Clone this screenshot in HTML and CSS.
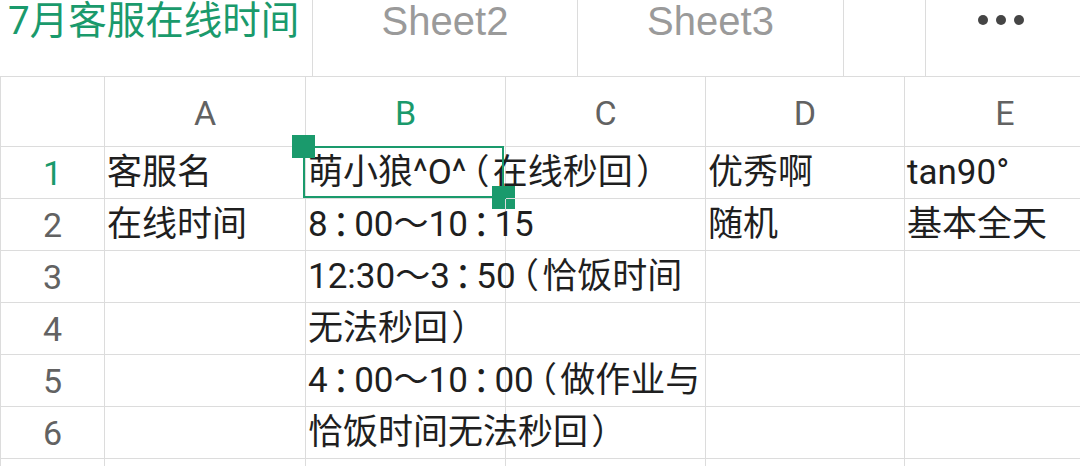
FILE: index.html
```html
<!DOCTYPE html>
<html lang="zh">
<head>
<meta charset="utf-8">
<link rel="stylesheet" href="styles.css">
</head>
<body>
<div class="tabs">
  <div class="tab tab-active">7月客服在线时间</div>
  <div class="tab tab-s2">Sheet2</div>
  <div class="tab tab-s3">Sheet3</div>
  <div class="tab tab-empty"></div>
  <div class="tab tab-more"><span class="dot"></span><span class="dot"></span><span class="dot"></span></div>
</div>
<div class="grid">
  <div class="hd corner"></div>
  <div class="hd col">A</div>
  <div class="hd col sel">B</div>
  <div class="hd col">C</div>
  <div class="hd col">D</div>
  <div class="hd col">E</div>

  <div class="rn sel">1</div>
  <div class="c">客服名</div>
  <div class="c cur">萌小狼^O^<span class="p">（</span>在线秒回<span class="p">）</span><span class="selbox"><span class="handle h-tl"></span><span class="handle h-br"></span></span></div>
  <div class="c"></div>
  <div class="c">优秀啊</div>
  <div class="c">tan90°</div>

  <div class="rn">2</div>
  <div class="c">在线时间</div>
  <div class="c">8<span class="p">：</span>00～10<span class="p">：</span>15</div>
  <div class="c"></div>
  <div class="c">随机</div>
  <div class="c">基本全天</div>

  <div class="rn">3</div>
  <div class="c"></div>
  <div class="c">12:30～3<span class="p">：</span>50<span class="p">（</span>恰饭时间</div>
  <div class="c"></div>
  <div class="c"></div>
  <div class="c"></div>

  <div class="rn">4</div>
  <div class="c"></div>
  <div class="c">无法秒回<span class="p">）</span></div>
  <div class="c"></div>
  <div class="c"></div>
  <div class="c"></div>

  <div class="rn">5</div>
  <div class="c"></div>
  <div class="c">4<span class="p">：</span>00～10<span class="p">：</span>00<span class="p">（</span>做作业与</div>
  <div class="c"></div>
  <div class="c"></div>
  <div class="c"></div>

  <div class="rn">6</div>
  <div class="c"></div>
  <div class="c">恰饭时间无法秒回<span class="p">）</span></div>
  <div class="c"></div>
  <div class="c"></div>
  <div class="c"></div>

  <div class="rn"></div>
  <div class="c"></div>
  <div class="c"></div>
  <div class="c"></div>
  <div class="c"></div>
  <div class="c"></div>
</div>
</body>
</html>
```

FILE: styles.css
```css
* { box-sizing: border-box; margin: 0; padding: 0; }
html, body { width: 1080px; height: 466px; overflow: hidden; background: #fff; }
body { font-family: Roboto, "Noto Sans CJK SC", sans-serif; }

.tabs {
  display: flex;
  height: 77px;
  border-bottom: 1px solid #dcdcdc;
}
.tab {
  border-right: 1px solid #dcdcdc;
  font-family: "Liberation Sans", Arial, sans-serif;
  font-size: 40px;
  line-height: 42px;
  color: #9a9a9a;
  text-align: center;
  white-space: nowrap;
}
.tab-active {
  width: 313px;
  text-align: left;
  padding-left: 8px;
  padding-top: 1px;
  color: #1a9a6c;
  font-family: Roboto, "Noto Sans CJK SC", sans-serif;
  font-size: 38.5px;
  line-height: 40px;
}
.tab-s2 { width: 265px; }
.tab-s3 { width: 266px; }
.tab-empty { width: 82px; }
.tab-more {
  flex: 1;
  border-right: none;
  display: flex;
  justify-content: center;
  gap: 8px;
  padding-top: 15px;
  padding-right: 4px;
}
.dot { width: 10px; height: 10px; border-radius: 50%; background: #454545; }

.grid {
  display: grid;
  width: 1080px;
  overflow: hidden;
  grid-template-columns: 105px 201px 200px 200px 199px 201px;
  grid-template-rows: 70px repeat(7, 52px);
}
.grid > div {
  border-right: 1px solid #dcdcdc;
  border-bottom: 1px solid #dcdcdc;
}
.corner, .rn { border-left: 1px solid #dcdcdc; }
.hd {
  font-size: 34px;
  color: #626262;
  display: flex;
  align-items: center;
  justify-content: center;
  padding-top: 2px;
}
.rn {
  font-size: 34px;
  color: #626262;
  display: flex;
  align-items: center;
  justify-content: center;
}
.sel { color: #1a9a6c; }
.c {
  font-size: 35px;
  line-height: 51px;
  color: #1f1f1f;
  white-space: nowrap;
  overflow: visible;
  padding-left: 2px;
  position: relative;
}
.p {
  font-feature-settings: "palt" 1;
  padding: 0 4.5px;
}
.selbox {
  position: absolute;
  left: -3px;
  top: -1px;
  width: 201px;
  height: 52px;
  border: 2px solid #1a9a6c;
}
.handle {
  position: absolute;
  width: 23px;
  height: 23px;
  background: #1a9a6c;
}
.h-tl { left: -13px; top: -13px; }
.h-br { right: -13px; bottom: -13px; }
```
